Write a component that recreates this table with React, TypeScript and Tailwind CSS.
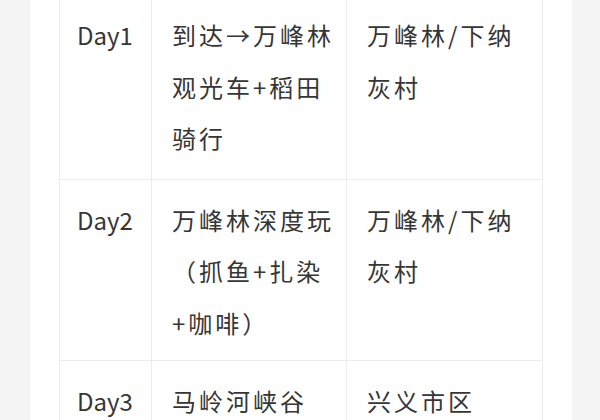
import React from "react";

const rows = [
  { day: "Day1", plan: "到达→万峰林观光车+稻田骑行", stay: "万峰林/下纳灰村" },
  { day: "Day2", plan: "万峰林深度玩（抓鱼+扎染+咖啡）", stay: "万峰林/下纳灰村" },
  { day: "Day3", plan: "马岭河峡谷", stay: "兴义市区" },
];

export default function App() {
  return (
    <div className="flex h-[420px] w-[600px] overflow-hidden bg-[#f4f4f4]">
      <div className="ml-[30px] flow-root h-full w-[542px] overflow-hidden bg-white pl-[29px]">
        <table
          className="mt-[-3px] w-[484px] table-fixed border-collapse text-[24px] leading-[51.5px] text-[#363636]"
          style={{ fontFamily: '"Noto Sans CJK SC", "Noto Sans", sans-serif' }}
        >
          <colgroup>
            <col className="w-[92px]" />
            <col className="w-[195px]" />
            <col className="w-[196px]" />
          </colgroup>
          <tbody>
            {rows.map((row, i) => {
              const pad = i === 0 ? "pt-[11px] pb-[15px]" : "pt-[14px] pb-[12px]";
              return (
                <tr key={row.day}>
                  <td className={`border border-[#ececec] ${pad} pl-[17px] align-top tracking-normal`}>
                    {row.day}
                  </td>
                  <td className={`border border-[#ececec] ${pad} pl-[20px] pr-[8px] align-top tracking-[3px]`}>
                    {row.plan}
                  </td>
                  <td className={`border border-[#ececec] ${pad} pl-[20px] pr-[8px] align-top tracking-[3px]`}>
                    {row.stay}
                  </td>
                </tr>
              );
            })}
          </tbody>
        </table>
      </div>
    </div>
  );
}
